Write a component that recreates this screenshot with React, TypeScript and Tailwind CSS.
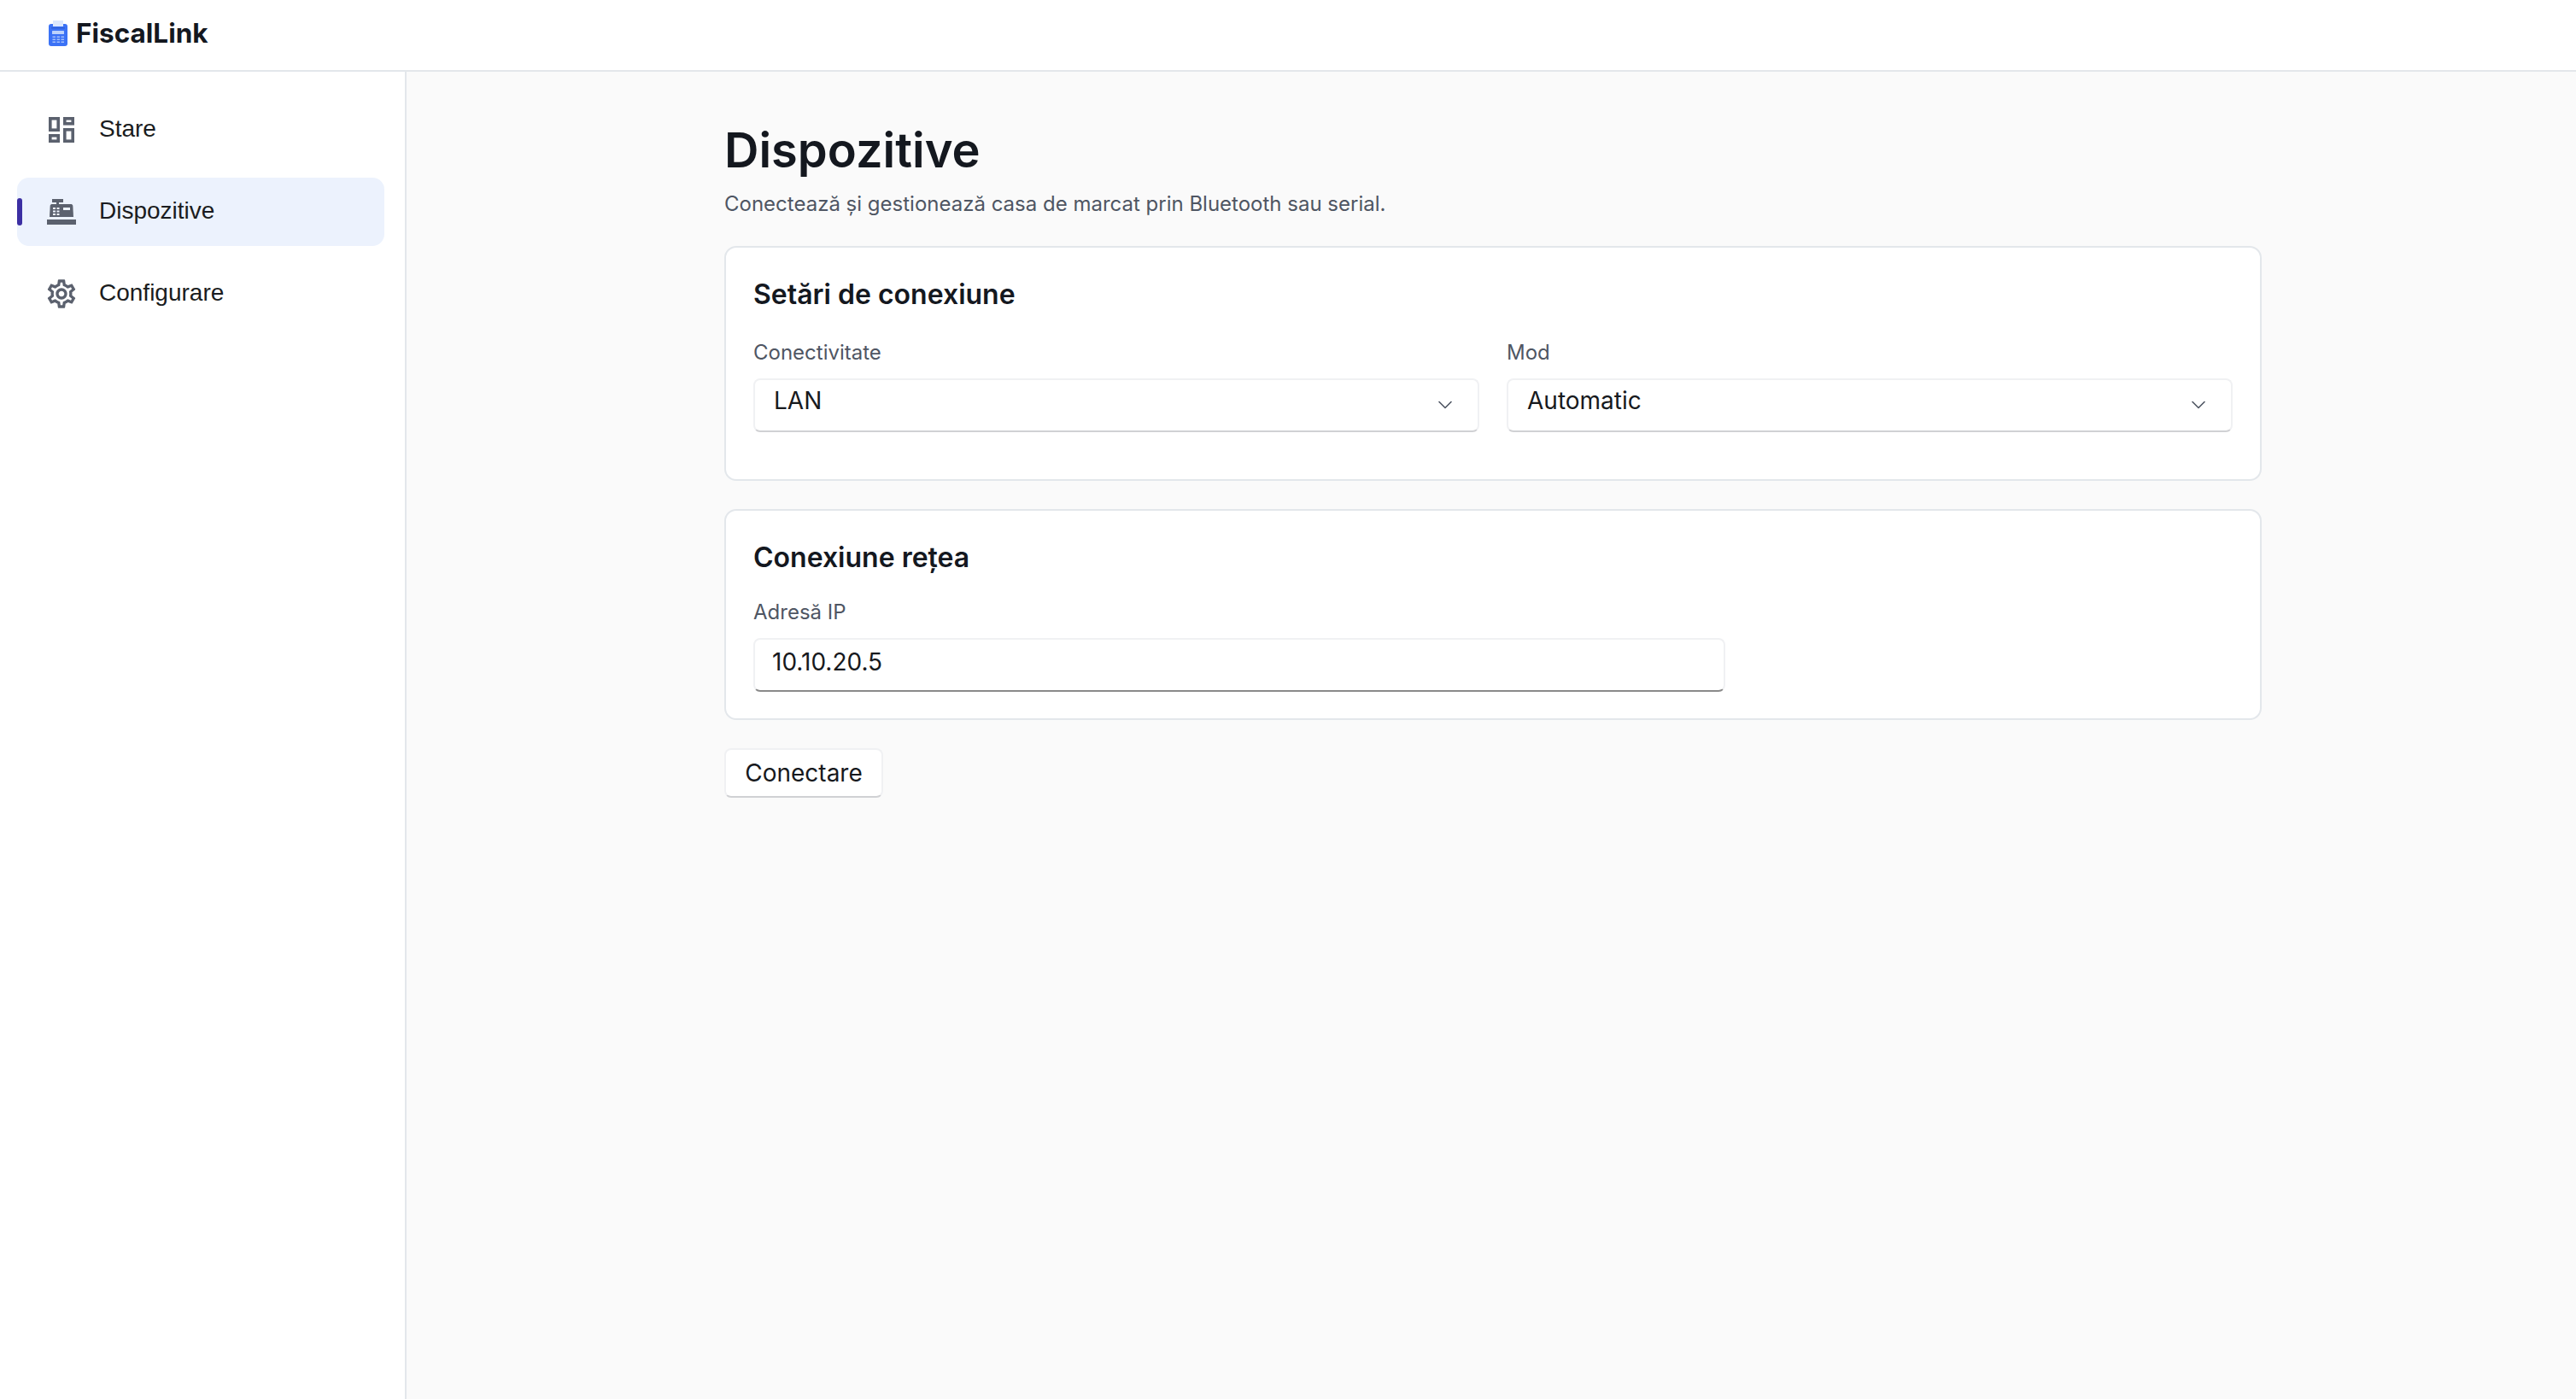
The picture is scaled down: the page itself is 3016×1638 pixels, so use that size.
import { MdOutlineSettings } from "react-icons/md";
import { LuChevronDown } from "react-icons/lu";

const INTER = "font-['Inter',sans-serif]";

function Logo() {
  return (
    <svg width="22" height="30" viewBox="0 0 22 30" className="block">
      <rect x="0" y="4" width="22" height="26" rx="3" fill="#3b72f6" />
      <rect x="5" y="0" width="12" height="7" fill="#dbe7fd" />
      <rect x="3" y="8" width="16" height="1.5" fill="#2f5fd8" />
      <rect x="4" y="12" width="14" height="4" rx="0.5" fill="#bcd2fb" />
      {[18.5, 21.5, 24.5].map((y) =>
        [4.5, 9.5, 14.5].map((x) => (
          <rect key={`${x}-${y}`} x={x} y={y} width="3.500" height="1.500" fill="#a3bffa" />
        )),
      )}
    </svg>
  );
}

function DashboardIcon() {
  return (
    <svg width="30" height="30" viewBox="0 0 30 30" fill="none" stroke="#5b616e" strokeWidth="3.6" className="block">
      <rect x="1.800" y="1.800" width="9.400" height="13.400" />
      <rect x="18.800" y="1.800" width="9.400" height="6" />
      <rect x="1.800" y="21.800" width="9.400" height="6.400" />
      <rect x="18.800" y="14.800" width="9.400" height="13.400" />
    </svg>
  );
}

function CashRegister() {
  return (
    <svg width="36" height="32" viewBox="0 0 36 32" fill="#5b616e" className="block">
      <rect x="7" y="1" width="13" height="4" />
      <rect x="12" y="5" width="3" height="3" />
      <path d="M7 7h22c1 0 2 .6 2.300 1.800L32 22H4l.7-13.200C5 7.600 6 7 7 7z" />
      <rect x="1" y="25" width="34" height="6" />
      <g fill="#edf3fe">
        <rect x="8" y="11" width="3" height="2" />
        <rect x="12.500" y="11" width="3" height="2" />
        <rect x="8" y="14.500" width="3" height="2" />
        <rect x="12.500" y="14.500" width="3" height="2" />
        <rect x="8" y="18" width="3" height="2" />
        <rect x="12.500" y="18" width="3" height="2" />
        <rect x="20" y="11" width="8" height="3" />
      </g>
    </svg>
  );
}

function NavItem({ icon, label, active }: { icon: React.ReactNode; label: string; active?: boolean }) {
  return (
    <div className={`relative flex h-[80px] items-center rounded-[14px] pl-[32px] ${active ? "bg-[#ecf2fd]" : ""}`}>
      {active && <span className="absolute left-0 top-[24px] h-[32px] w-[6px] rounded-full bg-[#3c2fa3]" />}
      <span className="flex w-[40px] justify-center text-[#5b616e]">{icon}</span>
      <span className="ml-[24px] pb-[2px] font-['Liberation_Sans',sans-serif] text-[28px] text-[#1a1c20]">{label}</span>
    </div>
  );
}

function SelectBox({ label, value }: { label: string; value: string }) {
  return (
    <div className="min-w-0 flex-1">
      <div className="text-[24px] leading-[32px] text-[#4f5663]">{label}</div>
      <div className="mt-[14px] flex h-[63px] items-start justify-between rounded-[8px] border-2 border-[#f0f1f3] border-b-[#d0d1d4] bg-white pl-[22px] pr-[24px]">
        <span className="pt-[3px] text-[28px] leading-[42px] text-[#17191d]">{value}</span>
        <LuChevronDown size={28} strokeWidth={1.4} color="#4f5663" className="mt-[15px]" />
      </div>
    </div>
  );
}

export default function App() {
  return (
    <div className={`flex h-[1638px] flex-col bg-white ${INTER}`}>
      <header className="flex h-[84px] items-center border-b-2 border-[#e3e7eb] bg-white pb-[4px] pl-[57px]">
        <Logo />
        <span className="ml-[10px] text-[31.5px] font-bold leading-[40px] text-[#14181f]">FiscalLink</span>
      </header>
      <div className="flex flex-1">
        <aside className="flex w-[476px] flex-col gap-[16px] border-r-2 border-[#e3e7eb] bg-white pb-0 pl-[20px] pr-[24px] pt-[28px]">
          <NavItem icon={<DashboardIcon />} label="Stare" />
          <NavItem icon={<CashRegister />} label="Dispozitive" active />
          <NavItem icon={<MdOutlineSettings size={40} />} label="Configurare" />
        </aside>
        <main className="flex-1 bg-[#fafafa] pl-[372px] pt-[58px]">
          <div className="w-[1800px]">
            <h1 className="text-[56px] font-semibold leading-[68px] text-[#14181f]">Dispozitive</h1>
            <p className="mt-[13px] text-[24px] leading-[32px] text-[#4f5663]">
              Conectează și gestionează casa de marcat prin Bluetooth sau serial.
            </p>
            <section className="mt-[33px] h-[275px] rounded-[14px] border-2 border-[#e3e7eb] bg-white px-[32px] pt-[34px]">
              <h2 className="text-[32px] font-semibold leading-[42px] text-[#14181f]">Setări de conexiune</h2>
              <div className="mt-[31px] flex gap-[32px]">
                <SelectBox label="Conectivitate" value="LAN" />
                <SelectBox label="Mod" value="Automatic" />
              </div>
            </section>
            <section className="mt-[33px] h-[247px] rounded-[14px] border-2 border-[#e3e7eb] bg-white px-[32px] pt-[34px]">
              <h2 className="text-[32px] font-semibold leading-[42px] text-[#14181f]">Conexiune rețea</h2>
              <div className="mt-[27px] text-[24px] leading-[32px] text-[#4f5663]">Adresă IP</div>
              <div className="mt-[14px] h-[63px] w-[1138px] rounded-[8px] border-2 border-[#f0f1f3] border-b-[#8a8a8a] bg-white pl-[20px]">
                <span className="text-[28px] leading-[53px] text-[#17191d]">10.10.20.5</span>
              </div>
            </section>
            <button className="mt-[33px] block h-[58px] w-[186px] rounded-[8px] border-2 border-[#f0f1f3] border-b-[#d0d1d4] bg-white text-[28px] text-[#17191d]">
              Conectare
            </button>
          </div>
        </main>
      </div>
    </div>
  );
}
